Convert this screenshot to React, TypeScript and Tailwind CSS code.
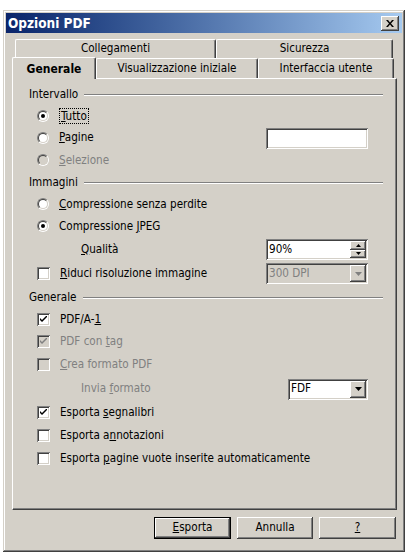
import React from 'react'

const raised =
  'shadow-[inset_-1px_-1px_#404040,inset_1px_1px_#ffffff,inset_-2px_-2px_#808080,inset_2px_2px_#d4d0c8]'
const sunken =
  'shadow-[inset_1px_1px_#808080,inset_-1px_-1px_#ffffff,inset_2px_2px_#404040,inset_-2px_-2px_#d4d0c8]'

function Radio({ checked, disabled }: { checked?: boolean; disabled?: boolean }) {
  return (
    <span className="relative flex h-[12px] w-[12px] shrink-0 items-center justify-center rounded-full border border-t-[#808080] border-l-[#808080] border-r-white border-b-white">
      <span
        className={`flex h-[10px] w-[10px] items-center justify-center rounded-full border border-t-[#404040] border-l-[#404040] border-r-[#d4d0c8] border-b-[#d4d0c8] ${
          disabled ? 'bg-[#d4d0c8]' : 'bg-white'
        }`}
      >
        {checked && <span className="h-[4px] w-[4px] rounded-full bg-black" />}
      </span>
    </span>
  )
}

function Check({ checked, disabled }: { checked?: boolean; disabled?: boolean }) {
  return (
    <span
      className={`flex h-[13px] w-[13px] shrink-0 items-center justify-center ${sunken} ${
        disabled ? 'bg-[#d4d0c8]' : 'bg-white'
      }`}
    >
      {checked && (
        <svg width="7" height="7" viewBox="0 0 7 7">
          <path
            d="M0 2 L0 4 L2 6 L7 1 L7 -1 L2 4 Z"
            fill={disabled ? '#808080' : '#000000'}
          />
        </svg>
      )}
    </span>
  )
}

function Section({ label, h }: { label: string; h: string }) {
  return (
    <div className={`flex items-center gap-[6px] pl-[16px] pr-[13px] ${h}`}>
      <span>{label}</span>
      <span className="flex-1 border-t border-t-[#808080] border-b border-b-white" />
    </div>
  )
}

function Row({
  h,
  children,
  right,
}: {
  h: string
  children: React.ReactNode
  right?: React.ReactNode
}) {
  return (
    <div className={`flex items-center pl-[24px] pr-[28px] ${h}`}>
      <div className="flex flex-1 items-center gap-[10px]">{children}</div>
      {right}
    </div>
  )
}

function DropArrow({ disabled }: { disabled?: boolean }) {
  return (
    <span className={`flex h-full w-[16px] items-center justify-center bg-[#d4d0c8] ${raised}`}>
      <svg width="7" height="4" viewBox="0 0 7 4">
        <path d="M0 0 L7 0 L3.5 4 Z" fill={disabled ? '#808080' : '#000000'} />
      </svg>
    </span>
  )
}

export default function App() {
  return (
    <div
      className="h-[555px] w-[411px] bg-white pt-[10px] pl-[3px] text-[11.6px] text-black"
      style={{ fontFamily: '"DejaVu Sans Condensed", "DejaVu Sans", Tahoma, sans-serif' }}
    >
      <div
        className={`flex h-[542px] w-[402px] flex-col bg-[#d4d0c8] p-[3px] shadow-[inset_-1px_-1px_#404040,inset_1px_1px_#d4d0c8,inset_-2px_-2px_#808080,inset_2px_2px_#ffffff]`}
      >
        {/* title bar */}
        <div className="flex h-[20px] items-center bg-gradient-to-r from-[#0a246a] to-[#a6caf0] pl-[2px] pr-[3px]">
          <span className="flex-1 text-[13.5px] font-bold text-white">Opzioni PDF</span>
          <span className={`flex h-[15px] w-[18px] items-center justify-center bg-[#d4d0c8] ${raised}`}>
            <svg width="8" height="7" viewBox="0 0 8 7">
              <path d="M0 0 L2 0 L4 2.5 L6 0 L8 0 L5 3.5 L8 7 L6 7 L4 4.5 L2 7 L0 7 L3 3.5 Z" fill="#000" />
            </svg>
          </span>
        </div>

        {/* tabs */}
        <div className="mt-[6px] flex flex-col px-[6px]">
          <div className="flex h-[19px] pl-[3px]">
            <div className="flex w-[201px] items-center justify-center rounded-t-[2px] border-t border-l border-white border-r border-r-[#404040] shadow-[inset_-1px_0_#808080]">
              Collegamenti
            </div>
            <div className="flex w-[177px] items-center justify-center rounded-t-[2px] border-t border-l border-white border-r border-r-[#404040] shadow-[inset_-1px_0_#808080]">
              Sicurezza
            </div>
          </div>
          <div className="flex h-[20px] items-end">
            <div className="relative z-10 -mb-px flex h-[22px] w-[84px] items-center justify-center rounded-t-[2px] border-t border-l border-white border-r border-r-[#404040] bg-[#d4d0c8] text-[12px] font-bold shadow-[inset_-1px_0_#808080]">
              Generale
            </div>
            <div className="flex h-[20px] w-[162px] items-center justify-center rounded-t-[2px] border-t border-l border-white border-r border-r-[#404040] shadow-[inset_-1px_0_#808080]">
              Visualizzazione iniziale
            </div>
            <div className="flex h-[20px] w-[136px] items-center justify-center rounded-t-[2px] border-t border-l border-white border-r border-r-[#404040] shadow-[inset_-1px_0_#808080]">
              Interfaccia utente
            </div>
          </div>

          {/* panel */}
          <div className="flex h-[432px] w-[385px] flex-col border-t border-l border-white border-r border-b border-r-[#404040] border-b-[#404040] pt-[5px] shadow-[inset_-1px_-1px_#808080]">
            <Section label="Intervallo" h="h-[21px]" />
            <Row h="h-[22px]">
              <Radio checked />
              <span className="border border-dotted border-black px-[1px] leading-[14px]">
                <u>T</u>utto
              </span>
            </Row>
            <Row
              h="h-[22px]"
              right={<span className={`h-[21px] w-[102px] bg-white ${sunken}`} />}
            >
              <Radio />
              <span>
                <u>P</u>agine
              </span>
            </Row>
            <Row h="h-[23px]">
              <Radio disabled />
              <span className="text-[#808080]">
                <u>S</u>elezione
              </span>
            </Row>
            <Section label="Immagini" h="h-[22px]" />
            <Row h="h-[21px]">
              <Radio />
              <span>
                <u>C</u>ompressione senza perdite
              </span>
            </Row>
            <Row h="h-[23px]">
              <Radio checked />
              <span>
                Compressione <u>J</u>PEG
              </span>
            </Row>
            <Row
              h="h-[23px]"
              right={
                <span className={`flex h-[21px] w-[102px] items-center bg-white p-[2px] ${sunken}`}>
                  <span className="flex-1 pl-[1px]">90%</span>
                  <span className="flex h-full w-[16px] flex-col">
                    <span className={`flex flex-1 items-center justify-center bg-[#d4d0c8] ${raised}`}>
                      <svg width="5" height="3" viewBox="0 0 5 3">
                        <path d="M0 3 L5 3 L2.5 0 Z" fill="#000" />
                      </svg>
                    </span>
                    <span className={`flex flex-1 items-center justify-center bg-[#d4d0c8] ${raised}`}>
                      <svg width="5" height="3" viewBox="0 0 5 3">
                        <path d="M0 0 L5 0 L2.5 3 Z" fill="#000" />
                      </svg>
                    </span>
                  </span>
                </span>
              }
            >
              <span className="pl-[44px]">
                <u>Q</u>ualità
              </span>
            </Row>
            <Row
              h="h-[25px]"
              right={
                <span className={`flex h-[21px] w-[102px] items-center bg-[#d4d0c8] p-[2px] ${sunken}`}>
                  <span className="flex-1 pl-[1px] text-[#808080]">300 DPI</span>
                  <DropArrow disabled />
                </span>
              }
            >
              <Check />
              <span>
                <u>R</u>iduci risoluzione immagine
              </span>
            </Row>
            <Section label="Generale" h="h-[23px]" />
            <Row h="h-[21px]">
              <Check checked />
              <span>
                PDF/A-<u>1</u>
              </span>
            </Row>
            <Row h="h-[23px]">
              <Check checked disabled />
              <span className="text-[#808080]">
                PDF con <u>t</u>ag
              </span>
            </Row>
            <Row h="h-[24px]">
              <Check disabled />
              <span className="text-[#808080]">
                <u>C</u>rea formato PDF
              </span>
            </Row>
            <Row
              h="h-[24px]"
              right={
                <span className={`flex h-[21px] w-[80px] items-center bg-white p-[2px] ${sunken}`}>
                  <span className="flex-1 pl-[1px]">FDF</span>
                  <DropArrow />
                </span>
              }
            >
              <span className="pl-[44px] text-[#808080]">
                Invia <u>f</u>ormato
              </span>
            </Row>
            <Row h="h-[23px]">
              <Check checked />
              <span>
                Esporta <u>s</u>egnalibri
              </span>
            </Row>
            <Row h="h-[23px]">
              <Check />
              <span>
                Esporta a<u>n</u>notazioni
              </span>
            </Row>
            <Row h="h-[23px]">
              <Check />
              <span>
                Esporta <u>p</u>agine vuote inserite automaticamente
              </span>
            </Row>
          </div>

          {/* buttons */}
          <div className="mt-[7px] flex justify-end gap-[6px]">
            <button className="h-[22px] w-[77px] border border-black bg-[#d4d0c8] shadow-[inset_-1px_-1px_#404040,inset_1px_1px_#ffffff,inset_-2px_-2px_#808080]">
              <u>E</u>sporta
            </button>
            <button className={`h-[22px] w-[76px] bg-[#d4d0c8] ${raised}`}>Annulla</button>
            <button className={`h-[22px] w-[77px] bg-[#d4d0c8] ${raised}`}>
              <u>?</u>
            </button>
          </div>
        </div>
      </div>
    </div>
  )
}
